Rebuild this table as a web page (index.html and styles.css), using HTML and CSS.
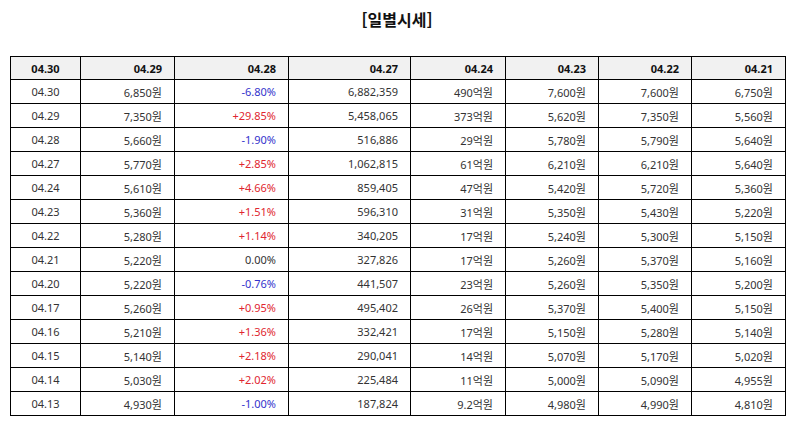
FILE: index.html
```html
<!DOCTYPE html>
<html lang="ko">
<head>
<meta charset="utf-8">
<title>일별시세</title>
<link rel="stylesheet" href="styles.css">
</head>
<body>
<h2 class="title">[일별시세]</h2>
<table class="price-table">
  <colgroup>
    <col class="c1"><col class="c2"><col class="c3"><col class="c4"><col class="c5"><col class="c6"><col class="c7"><col class="c8">
  </colgroup>
  <thead>
    <tr><th class="date">04.30</th><th>04.29</th><th>04.28</th><th>04.27</th><th>04.24</th><th>04.23</th><th>04.22</th><th>04.21</th></tr>
  </thead>
  <tbody>
    <tr><td class="date">04.30</td><td>6,850원</td><td class="down">-6.80%</td><td>6,882,359</td><td>490억원</td><td>7,600원</td><td>7,600원</td><td>6,750원</td></tr>
    <tr><td class="date">04.29</td><td>7,350원</td><td class="up">+29.85%</td><td>5,458,065</td><td>373억원</td><td>5,620원</td><td>7,350원</td><td>5,560원</td></tr>
    <tr><td class="date">04.28</td><td>5,660원</td><td class="down">-1.90%</td><td>516,886</td><td>29억원</td><td>5,780원</td><td>5,790원</td><td>5,640원</td></tr>
    <tr><td class="date">04.27</td><td>5,770원</td><td class="up">+2.85%</td><td>1,062,815</td><td>61억원</td><td>6,210원</td><td>6,210원</td><td>5,640원</td></tr>
    <tr><td class="date">04.24</td><td>5,610원</td><td class="up">+4.66%</td><td>859,405</td><td>47억원</td><td>5,420원</td><td>5,720원</td><td>5,360원</td></tr>
    <tr><td class="date">04.23</td><td>5,360원</td><td class="up">+1.51%</td><td>596,310</td><td>31억원</td><td>5,350원</td><td>5,430원</td><td>5,220원</td></tr>
    <tr><td class="date">04.22</td><td>5,280원</td><td class="up">+1.14%</td><td>340,205</td><td>17억원</td><td>5,240원</td><td>5,300원</td><td>5,150원</td></tr>
    <tr><td class="date">04.21</td><td>5,220원</td><td>0.00%</td><td>327,826</td><td>17억원</td><td>5,260원</td><td>5,370원</td><td>5,160원</td></tr>
    <tr><td class="date">04.20</td><td>5,220원</td><td class="down">-0.76%</td><td>441,507</td><td>23억원</td><td>5,260원</td><td>5,350원</td><td>5,200원</td></tr>
    <tr><td class="date">04.17</td><td>5,260원</td><td class="up">+0.95%</td><td>495,402</td><td>26억원</td><td>5,370원</td><td>5,400원</td><td>5,150원</td></tr>
    <tr><td class="date">04.16</td><td>5,210원</td><td class="up">+1.36%</td><td>332,421</td><td>17억원</td><td>5,150원</td><td>5,280원</td><td>5,140원</td></tr>
    <tr><td class="date">04.15</td><td>5,140원</td><td class="up">+2.18%</td><td>290,041</td><td>14억원</td><td>5,070원</td><td>5,170원</td><td>5,020원</td></tr>
    <tr><td class="date">04.14</td><td>5,030원</td><td class="up">+2.02%</td><td>225,484</td><td>11억원</td><td>5,000원</td><td>5,090원</td><td>4,955원</td></tr>
    <tr><td class="date">04.13</td><td>4,930원</td><td class="down">-1.00%</td><td>187,824</td><td>9.2억원</td><td>4,980원</td><td>4,990원</td><td>4,810원</td></tr>
  </tbody>
</table>
</body>
</html>
```

FILE: styles.css
```css
html, body {
  margin: 0;
  padding: 0;
  background: #fff;
}

body {
  font-family: "Noto Sans", "Noto Sans CJK KR", sans-serif;
  color: #333;
}

.title {
  margin: 0;
  padding-top: 9px;
  height: 47px;
  line-height: 20px;
  text-align: center;
  font-size: 16px;
  font-weight: bold;
  color: #111;
  font-family: "Noto Sans CJK KR", sans-serif;
}

.price-table {
  margin-left: 10px;
  width: 776px;
  table-layout: fixed;
  border-collapse: collapse;
  font-size: 11px;
}

.c1 { width: 70px; }
.c2 { width: 94px; }
.c3 { width: 114px; }
.c4 { width: 122px; }
.c5 { width: 95px; }
.c6 { width: 93px; }
.c7 { width: 93px; }
.c8 { width: 94px; }

.price-table th,
.price-table td {
  border: 1px solid #000;
  padding: 0 12px 0 4px;
  text-align: right;
  vertical-align: middle;
  white-space: nowrap;
}

.price-table th {
  height: 22px;
  background: #f1f1f1;
  font-weight: bold;
  color: #111;
}

.price-table td {
  height: 23px;
}

.price-table .date {
  text-align: center;
  padding: 0;
}

.up { color: #e0262f; }
.down { color: #3333cc; }
```
